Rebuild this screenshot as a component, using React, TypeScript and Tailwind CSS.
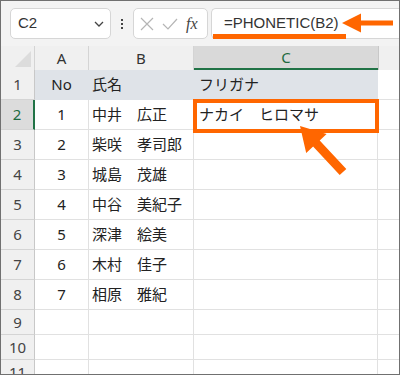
import React from "react";

const rows = [
  { no: "No", sei: "氏名", mei: "", kana: "フリガナ" },
  { no: "1", sei: "中井", mei: "広正", kana: "ナカイ　ヒロマサ" },
  { no: "2", sei: "柴咲", mei: "孝司郎", kana: "" },
  { no: "3", sei: "城島", mei: "茂雄", kana: "" },
  { no: "4", sei: "中谷", mei: "美紀子", kana: "" },
  { no: "5", sei: "深津", mei: "絵美", kana: "" },
  { no: "6", sei: "木村", mei: "佳子", kana: "" },
  { no: "7", sei: "相原", mei: "雅紀", kana: "" },
];

const font = { fontFamily: '"Noto Sans", "Noto Sans CJK JP", sans-serif' };
const latin = { fontFamily: '"Liberation Sans", sans-serif' };

export default function App() {
  return (
    <div
      className="relative w-[400px] h-[375px] overflow-hidden border border-[#707070] bg-white text-[#222]"
      style={font}
    >
      {/* toolbar */}
      <div className="h-[45px] bg-[#f3f3f3] flex items-start pt-[7px] pl-[9px]">
        <div className="w-[101px] h-[31px] bg-white border border-[#d6d6d6] rounded-[5px] flex items-center justify-between pl-[7px] pr-[5px]">
          <span className="text-[15px] text-[#333]" style={latin}>C2</span>
          <svg width="12" height="8" viewBox="0 0 12 8">
            <path d="M2 2 L6 6 L10 2" fill="none" stroke="#444" strokeWidth="1.3" />
          </svg>
        </div>
        <div className="w-[22px] h-[31px] flex flex-col items-center justify-center gap-[2px]">
          <div className="w-[2px] h-[2px] bg-[#444]" />
          <div className="w-[2px] h-[2px] bg-[#444]" />
          <div className="w-[2px] h-[2px] bg-[#444]" />
        </div>
        <div className="w-[75px] h-[31px] bg-white border border-[#d6d6d6] rounded-[5px] flex items-center pl-[6px] gap-[8px]">
          <svg width="14" height="14" viewBox="0 0 14 14">
            <path d="M1 1 L13 13 M13 1 L1 13" stroke="#b5b5b5" strokeWidth="1.2" />
          </svg>
          <svg width="16" height="12" viewBox="0 0 16 12">
            <path d="M1 6 L6 11 L15 1" fill="none" stroke="#b5b5b5" strokeWidth="1.2" />
          </svg>
          <span className="text-[16px] italic text-[#444]" style={{ fontFamily: '"Liberation Serif", serif' }}>
            fx
          </span>
        </div>
        <div className="ml-[3px] flex-1 h-[31px] bg-white border border-[#d6d6d6] rounded-l-[5px] border-r-0 flex items-center pl-[12px]">
          <span className="text-[15px] text-[#333]" style={latin}>=PHONETIC(B2)</span>
        </div>
      </div>

      {/* column headers */}
      <div className="flex h-[24px] bg-[#f0f0f0] text-[15px] text-[#333]">
        <div className="w-[34px] border-r border-[#d4d4d4] relative">
          <svg className="absolute right-[3px] bottom-[3px]" width="16" height="16" viewBox="0 0 16 16">
            <path d="M16 0 L16 16 L0 16 Z" fill="#dcdcdc" />
          </svg>
        </div>
        <div className="w-[54px] border-r border-[#d4d4d4] flex items-center justify-center">A</div>
        <div className="w-[105px] border-r border-[#d4d4d4] flex items-center justify-center">B</div>
        <div className="w-[184px] bg-[#d9d9d9] border-b-2 border-[#217346] flex items-center justify-center text-[#1e6b41]">
          C
        </div>
        <div className="flex-1 border-l border-[#c8c8c8]" />
      </div>

      {/* data rows */}
      {rows.map((r, i) => {
        const sel = i === 1;
        const head = i === 0;
        return (
          <div key={i} className="flex h-[30px] text-[15px]">
            <div
              className={
                sel
                  ? "w-[34px] bg-[#dcdcdc] border-r-2 border-[#217346] border-b border-b-[#d4d4d4] flex items-center justify-center text-[#1e6b41]"
                  : "w-[34px] bg-[#f0f0f0] border-r border-[#c8c8c8] border-b border-b-[#d4d4d4] flex items-center justify-center text-[#444]"
              }
            >
              {i + 1}
            </div>
            <div
              className={
                head
                  ? "w-[54px] bg-[#dfe3e8] border-r border-b border-[#dfe3e8] flex items-center justify-center"
                  : "w-[54px] border-r border-b border-[#e1e1e1] flex items-center justify-center"
              }
            >
              {r.no}
            </div>
            <div
              className={
                head
                  ? "w-[105px] bg-[#dfe3e8] border-r border-b border-[#dfe3e8] flex items-center pl-[3px]"
                  : "w-[105px] border-r border-b border-[#e1e1e1] flex items-center pl-[3px]"
              }
            >
              {r.mei ? `${r.sei}　${r.mei}` : r.sei}
            </div>
            <div
              className={
                head
                  ? "w-[184px] bg-[#dfe3e8] border-r border-b border-[#dfe3e8] flex items-center pl-[5px]"
                  : "w-[184px] border-r border-b border-[#e1e1e1] flex items-center pl-[5px]"
              }
            >
              {r.kana}
            </div>
            <div className="flex-1 border-b border-[#e1e1e1]" />
          </div>
        );
      })}
      {[9, 10, 11].map((n) => (
        <div key={n} className="flex h-[25px] text-[15px]">
          <div className="w-[34px] bg-[#f0f0f0] border-r border-[#c8c8c8] border-b border-b-[#d4d4d4] flex items-center justify-center text-[#444]">
            {n}
          </div>
          <div className="w-[54px] border-r border-b border-[#e1e1e1]" />
          <div className="w-[105px] border-r border-b border-[#e1e1e1]" />
          <div className="w-[184px] border-r border-b border-[#e1e1e1]" />
          <div className="flex-1 border-b border-[#e1e1e1]" />
        </div>
      ))}

      {/* annotations */}
      <div className="absolute left-[212px] top-[33px] w-[133px] h-[5px] bg-[#ff6600]" />
      <svg className="absolute left-[340px] top-[11px]" width="53" height="22" viewBox="0 0 53 22">
        <polygon points="1,11 20,1.5 20,8.5 52,8.5 52,13.5 20,13.5 20,20.5" fill="#ff6600" />
      </svg>
      <div className="absolute left-[192px] top-[98px] w-[186px] h-[34px] border-4 border-[#ff6600]" />
      <svg className="absolute left-[279px] top-[114px]" width="80" height="70" viewBox="0 0 80 70">
        <polygon
          points="20,11 46.6,18.9 39.7,25.4 66.3,53.9 59.7,60.1 33.1,31.6 26.2,38.1"
          fill="#ff6600"
        />
      </svg>
    </div>
  );
}
